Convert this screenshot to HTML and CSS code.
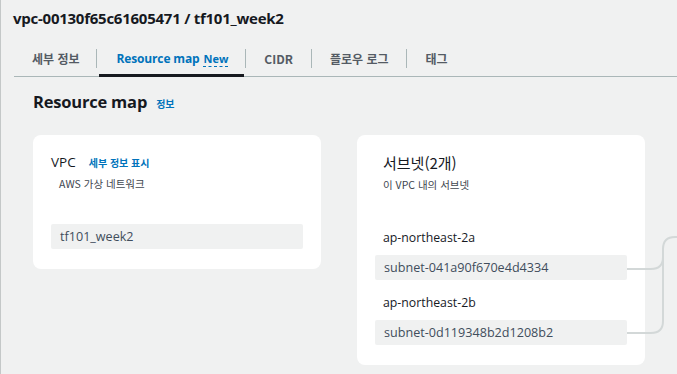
FILE: index.html
```html
<!DOCTYPE html>
<html lang="ko">
<head>
<meta charset="utf-8">
<link rel="stylesheet" href="styles.css">
</head>
<body>
<div class="page">
  <h1 class="title">vpc-00130f65c61605471 / tf101_week2</h1>
  <div class="tabs">
    <div class="tab"><span class="tab-label">세부 정보</span></div>
    <div class="tab active"><span class="tab-label">Resource map <span class="new">New</span></span></div>
    <div class="tab"><span class="tab-label">CIDR</span></div>
    <div class="tab"><span class="tab-label">플로우 로그</span></div>
    <div class="tab"><span class="tab-label">태그</span></div>
  </div>
  <div class="section-head">
    <h2 class="section-title">Resource map</h2>
    <a class="info">정보</a>
  </div>
  <div class="map">
    <div class="card vpc-card">
      <div class="card-head">
        <span class="card-title">VPC</span>
        <a class="detail-link">세부 정보 표시</a>
      </div>
      <div class="card-sub indent">AWS 가상 네트워크</div>
      <div class="value-box">tf101_week2</div>
    </div>
    <div class="card subnet-card">
      <div class="indent">
        <div class="card-title big">서브넷(2개)</div>
        <div class="card-sub">이 VPC 내의 서브넷</div>
      </div>
      <div class="az az-first">
        <div class="az-name">ap-northeast-2a</div>
        <div class="value-box">subnet-041a90f670e4d4334</div>
      </div>
      <div class="az az-next">
        <div class="az-name">ap-northeast-2b</div>
        <div class="value-box">subnet-0d119348b2d1208b2</div>
      </div>
    </div>
    <svg class="connectors" width="51" height="110" viewBox="0 0 51 110" fill="none">
      <path d="M0 38 H24 Q36 38 36 26 V18 Q36 6 48 6 H60" stroke="#d3d8d8" stroke-width="2"/>
      <path d="M0 102 H24 Q36 102 36 90 V26" stroke="#d3d8d8" stroke-width="2"/>
    </svg>
  </div>
</div>
</body>
</html>
```

FILE: styles.css
```css
* { box-sizing: border-box; }
html, body {
  margin: 0;
  padding: 0;
  background: #f0f1f1;
  height: 100%;
  overflow: hidden;
}
body {
  font-family: "Open Sans", "Noto Sans CJK KR", sans-serif;
  color: #16191f;
  border-left: 1px solid #c4c8c8;
}
.page {
  padding: 8px 0 0 12px;
}
.title {
  margin: 0;
  font-size: 15px;
  line-height: 20px;
  font-weight: 700;
  letter-spacing: -0.25px;
}
.tabs {
  display: flex;
  margin-top: 12px;
  margin-left: 1px;
  border-bottom: 1px solid #aab7b8;
}
.tab {
  position: relative;
  padding: 9px 0 8px;
}
.tab + .tab .tab-label { border-left: 1px solid #aab7b8; }
.tab-label {
  display: block;
  padding: 0 18px 0 18px;
  line-height: 19px;
  font-size: 12px;
  font-weight: 700;
  color: #545b64;
  font-family: "Noto Sans CJK KR", "Open Sans", sans-serif;
}
.tab:first-child .tab-label { padding: 0 16px 0 18px; }
.tab.active .tab-label {
  color: #0073bb;
  font-family: "Open Sans", "Noto Sans CJK KR", sans-serif;
  padding: 0 17px 0 20px;
  letter-spacing: -0.15px;
}
.tab.active::after {
  content: "";
  position: absolute;
  left: 3px;
  right: 1px;
  bottom: -1px;
  height: 3px;
  background: #16191f;
}
.new {
  font-size: 11px;
  border-bottom: 1px dashed #0073bb;
  margin-left: 1px;
  letter-spacing: 0;
}
.section-head {
  display: flex;
  align-items: baseline;
  gap: 9px;
  padding-left: 20px;
  margin-top: 13px;
}
.section-title {
  margin: 0;
  font-size: 16.5px;
  line-height: 24px;
  font-weight: 700;
  letter-spacing: -0.2px;
}
.info {
  font-size: 10px;
  font-weight: 700;
  color: #0073bb;
  font-family: "Noto Sans CJK KR", sans-serif;
}
.map {
  position: relative;
  display: flex;
  align-items: flex-start;
  gap: 36px;
  margin-top: 21px;
  margin-left: 20px;
}
.card {
  background: #ffffff;
  border-radius: 8px;
  width: 288px;
  padding: 18px 18px 20px;
}
.card-head {
  display: flex;
  align-items: baseline;
  gap: 13px;
}
.card-title {
  font-size: 13.5px;
  line-height: 19px;
  font-family: "Open Sans", "Noto Sans CJK KR", sans-serif;
}
.card-title.big {
  font-size: 15px;
  font-family: "Noto Sans CJK KR", sans-serif;
  line-height: 20px;
}
.detail-link {
  font-size: 10px;
  font-weight: 700;
  color: #0073bb;
  font-family: "Noto Sans CJK KR", sans-serif;
}
.card-sub {
  font-size: 10.5px;
  line-height: 16px;
  color: #414750;
  margin-top: 4px;
  font-family: "Noto Sans CJK KR", sans-serif;
}
.indent { padding-left: 8px; }
.vpc-card .value-box { margin-top: 32px; }
.value-box {
  background: #f0f1f1;
  height: 25px;
  line-height: 25px;
  padding-left: 9px;
  font-size: 12.6px;
  color: #414d5c;
  border-radius: 2px;
}
.az-first { margin-top: 36px; }
.az-next { margin-top: 14px; }
.az-name {
  padding-left: 8px;
  font-size: 12.3px;
  line-height: 18px;
  margin-bottom: 8px;
}
.connectors {
  position: absolute;
  left: 594px;
  top: 96px;
}
```
